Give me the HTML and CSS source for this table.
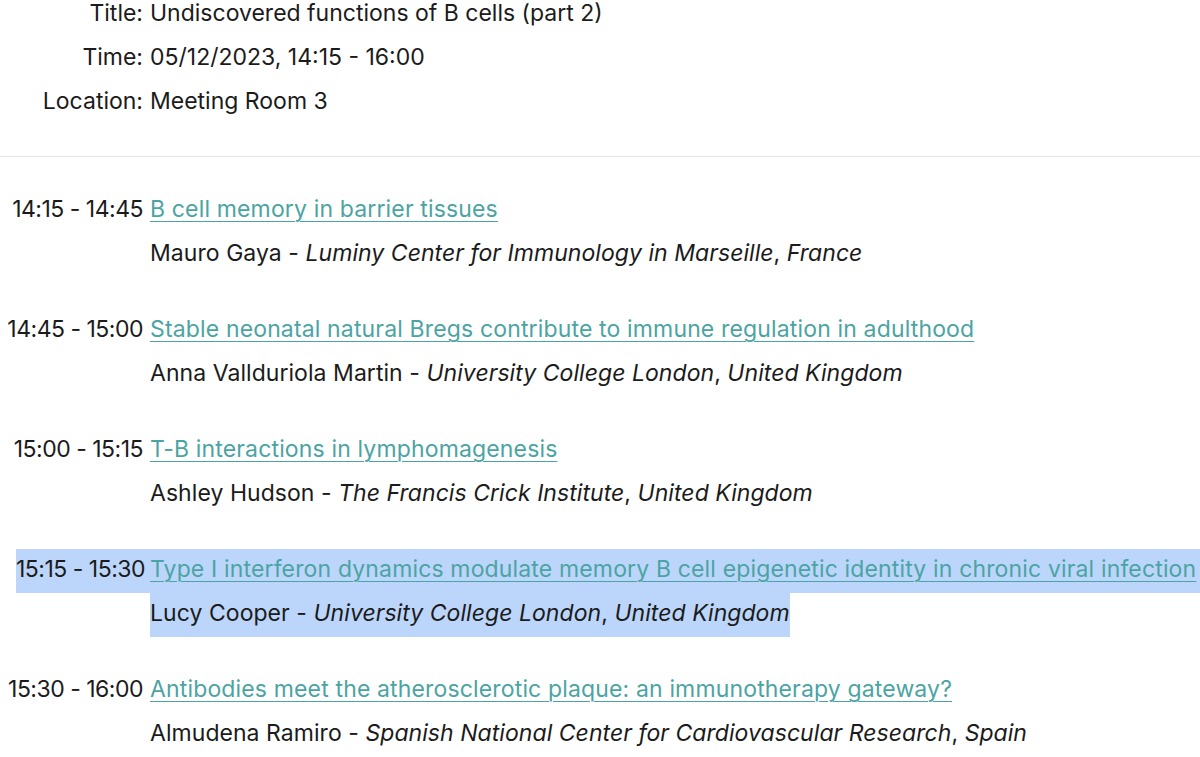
FILE: index.html
```html
<!DOCTYPE html>
<html lang="en">
<head>
  <meta charset="UTF-8">
  <meta name="viewport" content="width=device-width, initial-scale=1.0">
  <title>Undiscovered functions of B cells (part 2)</title>
  <link rel="stylesheet" href="styles.css">
</head>
<body>
  <!-- Session details -->
  <div class="session-info">
    <div class="info-row">
      <div class="label">Title:</div>
      <div class="value">Undiscovered functions of B cells (part 2)</div>
    </div>
    <div class="info-row">
      <div class="label">Time:</div>
      <div class="value">05/12/2023, 14:15 - 16:00</div>
    </div>
    <div class="info-row">
      <div class="label">Location:</div>
      <div class="value">Meeting Room 3</div>
    </div>
  </div>

  <hr class="divider">

  <!-- Talks -->
  <div class="programme">
    <div class="talk">
      <div class="time">14:15 - 14:45</div>
      <div class="details">
        <div class="talk-title"><a href="#">B cell memory in barrier tissues</a></div>
        <div class="speaker">Mauro Gaya - <em>Luminy Center for Immunology in Marseille</em>, <em>France</em></div>
      </div>
    </div>

    <div class="talk">
      <div class="time">14:45 - 15:00</div>
      <div class="details">
        <div class="talk-title"><a href="#">Stable neonatal natural Bregs contribute to immune regulation in adulthood</a></div>
        <div class="speaker">Anna Vallduriola Martin - <em>University College London</em>, <em>United Kingdom</em></div>
      </div>
    </div>

    <div class="talk">
      <div class="time">15:00 - 15:15</div>
      <div class="details">
        <div class="talk-title"><a href="#">T-B interactions in lymphomagenesis</a></div>
        <div class="speaker">Ashley Hudson - <em>The Francis Crick Institute</em>, <em>United Kingdom</em></div>
      </div>
    </div>

    <div class="talk selected">
      <div class="time"><span class="mark">15:15 - 15:30</span></div>
      <div class="details">
        <div class="talk-title mark"><a href="#">Type I interferon dynamics modulate memory B cell epigenetic identity in chronic viral infection</a></div>
        <div class="speaker"><span class="mark">Lucy Cooper - <em>University College London</em>, <em>United Kingdom</em></span></div>
      </div>
    </div>

    <div class="talk">
      <div class="time">15:30 - 16:00</div>
      <div class="details">
        <div class="talk-title"><a href="#">Antibodies meet the atherosclerotic plaque: an immunotherapy gateway?</a></div>
        <div class="speaker">Almudena Ramiro - <em>Spanish National Center for Cardiovascular Research</em>, <em>Spain</em></div>
      </div>
    </div>
  </div>
</body>
</html>
```

FILE: styles.css
```css
body {
  font-family: "Inter", "Noto Sans", sans-serif;
  font-size: 23px;
  line-height: 40px;
  color: #1b1b1b;
  background: #ffffff;
  margin: 0;
  padding: 0;
  overflow: hidden;
}
.session-info {
  margin-top: -7px;
}
.info-row,
.talk {
  display: grid;
  grid-template-columns: 150px 1fr;
}
.label,
.value,
.time,
.talk-title,
.speaker {
  padding-bottom: 4px;
}
.label,
.time {
  text-align: right;
  padding-right: 7px;
  white-space: nowrap;
}
.time {
  letter-spacing: -0.5px;
}
.divider {
  border: none;
  border-top: 1px solid #e6e6e6;
  margin: 31px 0 32px;
}
.talk {
  margin-bottom: 32px;
}
.talk-title {
  white-space: nowrap;
  letter-spacing: 0.15px;
}
.talk-title a {
  color: #4ba4a3;
  text-decoration: underline;
  text-underline-offset: 4px;
  text-decoration-thickness: 1px;
}
.speaker {
  letter-spacing: 0.05px;
}
.speaker em {
  font-style: italic;
}
.selected .time {
  padding: 0;
}
.selected .time .mark {
  display: block;
  margin-left: 16px;
  padding-right: 7px;
  padding-bottom: 4px;
}
.mark {
  background: #bbd6fa;
}
.speaker .mark {
  display: inline-block;
  padding-bottom: 4px;
  margin-bottom: -4px;
}
```
